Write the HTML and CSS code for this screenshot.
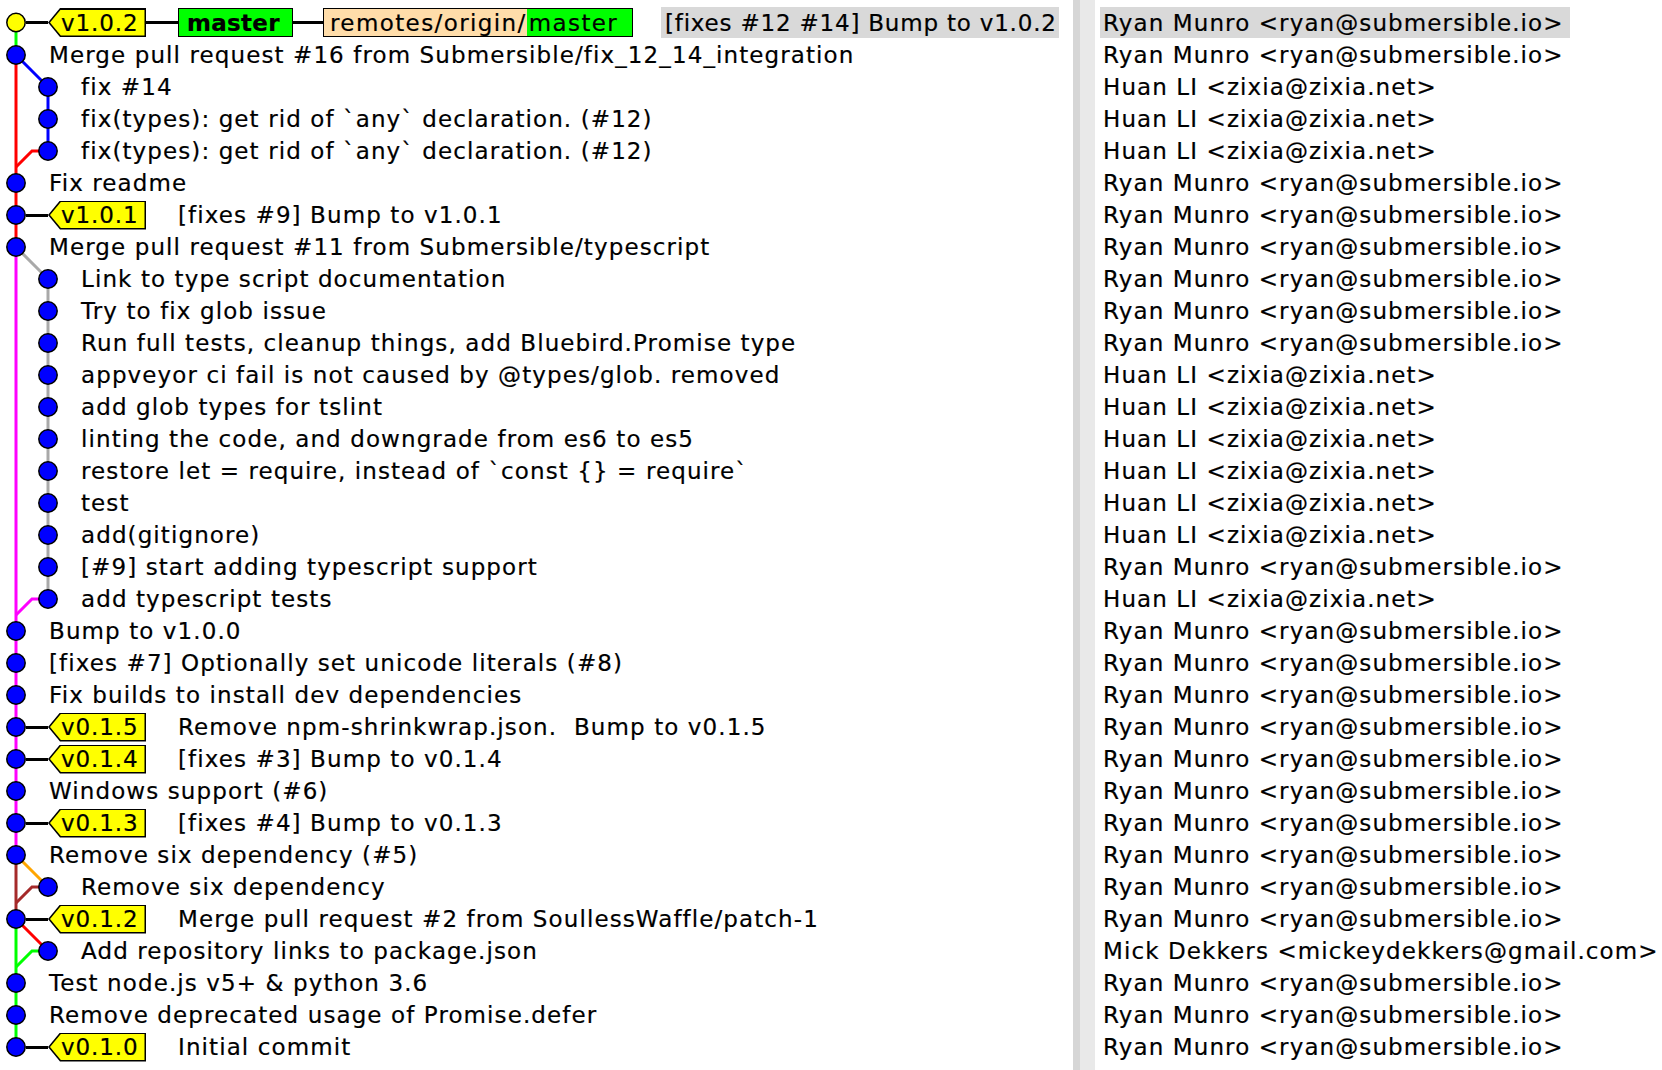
FILE: index.html
```html
<!DOCTYPE html>
<html>
<head>
<meta charset="utf-8">
<title>gitk</title>
<link rel="stylesheet" href="styles.css">
</head>
<body>
<div class="app">
  <div class="pane-graph">
    <svg class="graph" width="80" height="1070" viewBox="0 0 80 1070">
      <g fill="none" stroke-width="3" stroke-linejoin="miter">
        <path stroke="#00ff00" d="M16 22.5V55"/>
        <path stroke="#ff0000" d="M16 55V247"/>
        <path stroke="#0000ff" d="M16 55L48 87V151"/>
        <path stroke="#ff0000" d="M48 151H32L16 167"/>
        <path stroke="#ff00ff" d="M16 247V855"/>
        <path stroke="#a9a9a9" d="M16 247L48 279V599"/>
        <path stroke="#ff00ff" d="M48 599H32L16 615"/>
        <path stroke="#ffa500" d="M16 855L48 887"/>
        <path stroke="#a52a2a" d="M16 855V919"/>
        <path stroke="#a52a2a" d="M48 887H32L16 903"/>
        <path stroke="#ff0000" d="M16 919L48 951"/>
        <path stroke="#00ff00" d="M16 919V1047"/>
        <path stroke="#00ff00" d="M48 951H32L16 967"/>
      </g>
      <g stroke="#000" stroke-width="1.5" fill="#0000ff">
        <circle cx="16" cy="22.5" r="9.2" fill="#ffff00"/>
        <circle cx="16" cy="55" r="9.2"/>
        <circle cx="48" cy="87" r="9.2"/>
        <circle cx="48" cy="119" r="9.2"/>
        <circle cx="48" cy="151" r="9.2"/>
        <circle cx="16" cy="183" r="9.2"/>
        <circle cx="16" cy="215" r="9.2"/>
        <circle cx="16" cy="247" r="9.2"/>
        <circle cx="48" cy="279" r="9.2"/>
        <circle cx="48" cy="311" r="9.2"/>
        <circle cx="48" cy="343" r="9.2"/>
        <circle cx="48" cy="375" r="9.2"/>
        <circle cx="48" cy="407" r="9.2"/>
        <circle cx="48" cy="439" r="9.2"/>
        <circle cx="48" cy="471" r="9.2"/>
        <circle cx="48" cy="503" r="9.2"/>
        <circle cx="48" cy="535" r="9.2"/>
        <circle cx="48" cy="567" r="9.2"/>
        <circle cx="48" cy="599" r="9.2"/>
        <circle cx="16" cy="631" r="9.2"/>
        <circle cx="16" cy="663" r="9.2"/>
        <circle cx="16" cy="695" r="9.2"/>
        <circle cx="16" cy="727" r="9.2"/>
        <circle cx="16" cy="759" r="9.2"/>
        <circle cx="16" cy="791" r="9.2"/>
        <circle cx="16" cy="823" r="9.2"/>
        <circle cx="16" cy="855" r="9.2"/>
        <circle cx="48" cy="887" r="9.2"/>
        <circle cx="16" cy="919" r="9.2"/>
        <circle cx="48" cy="951" r="9.2"/>
        <circle cx="16" cy="983" r="9.2"/>
        <circle cx="16" cy="1015" r="9.2"/>
        <circle cx="16" cy="1047" r="9.2"/>
      </g>
    </svg>
    <div class="list">
      <div class="row first">
        <span class="gutt"></span><span class="conn c22"></span>
        <span class="tag"><span class="tag-in">v1.0.2</span></span>
        <span class="conn c32"></span>
        <span class="head">master</span>
        <span class="conn c30"></span>
        <span class="remote"><span class="rprefix">remotes/origin/</span><span class="rhead">master</span></span>
        <span class="sel">[fixes #12 #14] Bump to v1.0.2</span>
      </div>
      <div class="row"><span class="gut0"></span><span class="msg">Merge pull request #16 from Submersible/fix_12_14_integration</span></div>
      <div class="row"><span class="gut1"></span><span class="msg">fix #14</span></div>
      <div class="row"><span class="gut1"></span><span class="msg">fix(types): get rid of `any` declaration. (#12)</span></div>
      <div class="row"><span class="gut1"></span><span class="msg">fix(types): get rid of `any` declaration. (#12)</span></div>
      <div class="row"><span class="gut0"></span><span class="msg">Fix readme</span></div>
      <div class="row"><span class="gutt"></span><span class="conn c22"></span><span class="tag"><span class="tag-in">v1.0.1</span></span><span class="msg after-tag">[fixes #9] Bump to v1.0.1</span></div>
      <div class="row"><span class="gut0"></span><span class="msg">Merge pull request #11 from Submersible/typescript</span></div>
      <div class="row"><span class="gut1"></span><span class="msg">Link to type script documentation</span></div>
      <div class="row"><span class="gut1"></span><span class="msg">Try to fix glob issue</span></div>
      <div class="row"><span class="gut1"></span><span class="msg">Run full tests, cleanup things, add Bluebird.Promise type</span></div>
      <div class="row"><span class="gut1"></span><span class="msg">appveyor ci fail is not caused by @types/glob. removed</span></div>
      <div class="row"><span class="gut1"></span><span class="msg">add glob types for tslint</span></div>
      <div class="row"><span class="gut1"></span><span class="msg">linting the code, and downgrade from es6 to es5</span></div>
      <div class="row"><span class="gut1"></span><span class="msg">restore let = require, instead of `const {} = require`</span></div>
      <div class="row"><span class="gut1"></span><span class="msg">test</span></div>
      <div class="row"><span class="gut1"></span><span class="msg">add(gitignore)</span></div>
      <div class="row"><span class="gut1"></span><span class="msg">[#9] start adding typescript support</span></div>
      <div class="row"><span class="gut1"></span><span class="msg">add typescript tests</span></div>
      <div class="row"><span class="gut0"></span><span class="msg">Bump to v1.0.0</span></div>
      <div class="row"><span class="gut0"></span><span class="msg">[fixes #7] Optionally set unicode literals (#8)</span></div>
      <div class="row"><span class="gut0"></span><span class="msg">Fix builds to install dev dependencies</span></div>
      <div class="row"><span class="gutt"></span><span class="conn c22"></span><span class="tag"><span class="tag-in">v0.1.5</span></span><span class="msg after-tag">Remove npm-shrinkwrap.json.  Bump to v0.1.5</span></div>
      <div class="row"><span class="gutt"></span><span class="conn c22"></span><span class="tag"><span class="tag-in">v0.1.4</span></span><span class="msg after-tag">[fixes #3] Bump to v0.1.4</span></div>
      <div class="row"><span class="gut0"></span><span class="msg">Windows support (#6)</span></div>
      <div class="row"><span class="gutt"></span><span class="conn c22"></span><span class="tag"><span class="tag-in">v0.1.3</span></span><span class="msg after-tag">[fixes #4] Bump to v0.1.3</span></div>
      <div class="row"><span class="gut0"></span><span class="msg">Remove six dependency (#5)</span></div>
      <div class="row"><span class="gut1"></span><span class="msg">Remove six dependency</span></div>
      <div class="row"><span class="gutt"></span><span class="conn c22"></span><span class="tag"><span class="tag-in">v0.1.2</span></span><span class="msg after-tag">Merge pull request #2 from SoullessWaffle/patch-1</span></div>
      <div class="row"><span class="gut1"></span><span class="msg">Add repository links to package.json</span></div>
      <div class="row"><span class="gut0"></span><span class="msg">Test node.js v5+ &amp; python 3.6</span></div>
      <div class="row"><span class="gut0"></span><span class="msg">Remove deprecated usage of Promise.defer</span></div>
      <div class="row"><span class="gutt"></span><span class="conn c22"></span><span class="tag"><span class="tag-in">v0.1.0</span></span><span class="msg after-tag">Initial commit</span></div>
    </div>
  </div>
  <div class="sash"><span class="sash-dark"></span><span class="sash-light"></span></div>
  <div class="pane-author">
    <div class="list">
      <div class="row first"><span class="sel-a">Ryan Munro &lt;ryan@submersible.io&gt;</span></div>
      <div class="row"><span class="author">Ryan Munro &lt;ryan@submersible.io&gt;</span></div>
      <div class="row"><span class="author">Huan LI &lt;zixia@zixia.net&gt;</span></div>
      <div class="row"><span class="author">Huan LI &lt;zixia@zixia.net&gt;</span></div>
      <div class="row"><span class="author">Huan LI &lt;zixia@zixia.net&gt;</span></div>
      <div class="row"><span class="author">Ryan Munro &lt;ryan@submersible.io&gt;</span></div>
      <div class="row"><span class="author">Ryan Munro &lt;ryan@submersible.io&gt;</span></div>
      <div class="row"><span class="author">Ryan Munro &lt;ryan@submersible.io&gt;</span></div>
      <div class="row"><span class="author">Ryan Munro &lt;ryan@submersible.io&gt;</span></div>
      <div class="row"><span class="author">Ryan Munro &lt;ryan@submersible.io&gt;</span></div>
      <div class="row"><span class="author">Ryan Munro &lt;ryan@submersible.io&gt;</span></div>
      <div class="row"><span class="author">Huan LI &lt;zixia@zixia.net&gt;</span></div>
      <div class="row"><span class="author">Huan LI &lt;zixia@zixia.net&gt;</span></div>
      <div class="row"><span class="author">Huan LI &lt;zixia@zixia.net&gt;</span></div>
      <div class="row"><span class="author">Huan LI &lt;zixia@zixia.net&gt;</span></div>
      <div class="row"><span class="author">Huan LI &lt;zixia@zixia.net&gt;</span></div>
      <div class="row"><span class="author">Huan LI &lt;zixia@zixia.net&gt;</span></div>
      <div class="row"><span class="author">Ryan Munro &lt;ryan@submersible.io&gt;</span></div>
      <div class="row"><span class="author">Huan LI &lt;zixia@zixia.net&gt;</span></div>
      <div class="row"><span class="author">Ryan Munro &lt;ryan@submersible.io&gt;</span></div>
      <div class="row"><span class="author">Ryan Munro &lt;ryan@submersible.io&gt;</span></div>
      <div class="row"><span class="author">Ryan Munro &lt;ryan@submersible.io&gt;</span></div>
      <div class="row"><span class="author">Ryan Munro &lt;ryan@submersible.io&gt;</span></div>
      <div class="row"><span class="author">Ryan Munro &lt;ryan@submersible.io&gt;</span></div>
      <div class="row"><span class="author">Ryan Munro &lt;ryan@submersible.io&gt;</span></div>
      <div class="row"><span class="author">Ryan Munro &lt;ryan@submersible.io&gt;</span></div>
      <div class="row"><span class="author">Ryan Munro &lt;ryan@submersible.io&gt;</span></div>
      <div class="row"><span class="author">Ryan Munro &lt;ryan@submersible.io&gt;</span></div>
      <div class="row"><span class="author">Ryan Munro &lt;ryan@submersible.io&gt;</span></div>
      <div class="row"><span class="author">Mick Dekkers &lt;mickeydekkers@gmail.com&gt;</span></div>
      <div class="row"><span class="author">Ryan Munro &lt;ryan@submersible.io&gt;</span></div>
      <div class="row"><span class="author">Ryan Munro &lt;ryan@submersible.io&gt;</span></div>
      <div class="row"><span class="author">Ryan Munro &lt;ryan@submersible.io&gt;</span></div>
    </div>
  </div>
</div>
</body>
</html>
```

FILE: styles.css
```css
* { box-sizing: border-box; }
html, body { margin: 0; padding: 0; background: #fff; }
body {
  font-family: "DejaVu Sans", "Liberation Sans", sans-serif;
  font-size: 23px;
  letter-spacing: 1.1px;
  color: #000;
  -webkit-text-stroke: 0.2px #000;
}
.app {
  display: flex;
  width: 1662px;
  height: 1070px;
  overflow: hidden;
}
.pane-graph {
  position: relative;
  width: 1073px;
  flex: none;
  overflow: hidden;
}
.graph {
  position: absolute;
  left: 0;
  top: 0;
  z-index: 0;
}
.list {
  position: relative;
  display: flex;
  flex-direction: column;
  padding-top: 6px;
}
.row {
  display: flex;
  align-items: center;
  height: 32px;
  flex: none;
  white-space: pre;
}
.row.first { height: 33px; }
.gut0 { width: 49px; flex: none; }
.gut1 { width: 81px; flex: none; }
.gutt { width: 26px; flex: none; }
.conn { height: 3px; background: #000; flex: none; }
.c22 { width: 22px; }
.c32 { width: 32px; }
.c30 { width: 30px; }
.tag {
  width: 98px;
  height: 29px;
  flex: none;
  display: flex;
  padding: 1.5px 1.5px 1.5px 2px;
  background: #000;
  clip-path: polygon(12px 0, 100% 0, 100% 100%, 12px 100%, 0 50%);
}
.tag-in {
  flex: 1;
  display: flex;
  align-items: center;
  padding-left: 11px;
  letter-spacing: 0.9px;
  background: #ffff00;
  clip-path: polygon(10.8px 0, 100% 0, 100% 100%, 10.8px 100%, 0 50%);
}
.head {
  width: 115px;
  height: 29px;
  flex: none;
  display: flex;
  align-items: center;
  padding-left: 8px;
  letter-spacing: 0.3px;
  border: 1.5px solid #000;
  background: #00ff00;
  font-weight: bold;
}
.remote {
  width: 310px;
  height: 29px;
  flex: none;
  display: flex;
  letter-spacing: 1.4px;
  border: 1.5px solid #000;
}
.rprefix {
  flex: none;
  display: flex;
  align-items: center;
  padding-left: 6px;
  background: #ffddaa;
}
.rhead {
  flex: 1;
  display: flex;
  align-items: center;
  padding-left: 2px;
  background: #00ff00;
}
.sel {
  margin-left: 28px;
  height: 31px;
  display: flex;
  align-items: center;
  padding: 0 2px 0 4px;
  letter-spacing: 0.8px;
  background: #d9d9d9;
}
.after-tag { margin-left: 32px; }
.sash {
  width: 23px;
  flex: none;
  display: flex;
}
.sash-dark { width: 7px; background: #d6d6d6; }
.sash-light { width: 15px; background: #e9e9e9; }
.pane-author {
  flex: 1;
  padding-left: 4px;
  overflow: hidden;
}
.author { padding-left: 3px; }
.sel-a {
  height: 31px;
  display: flex;
  align-items: center;
  padding: 0 6px 0 3px;
  background: #d9d9d9;
}
```
